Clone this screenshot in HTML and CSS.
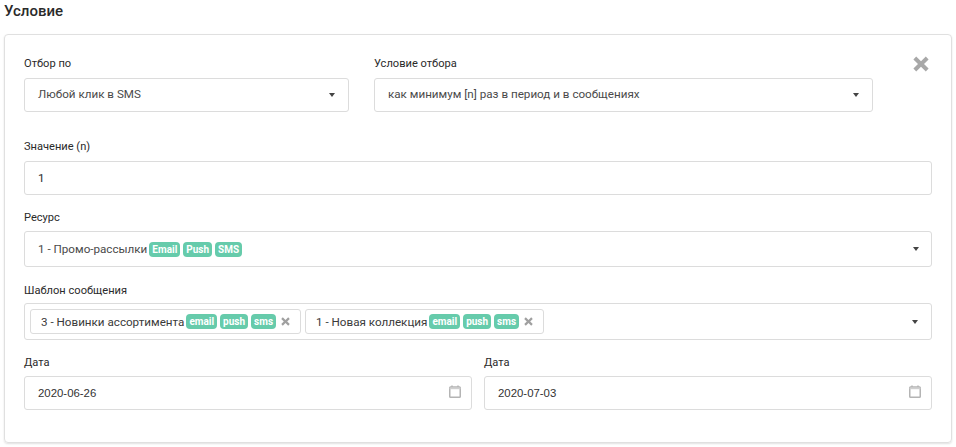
FILE: index.html
```html
<!DOCTYPE html>
<html lang="ru">
<head>
<meta charset="utf-8">
<title>Условие</title>
<link rel="stylesheet" href="styles.css">
</head>
<body>
<h2 class="title">Условие</h2>
<section class="card">
  <div class="row row-top">
    <div class="field f-by">
      <label class="label">Отбор по</label>
      <div class="control select"><span class="value">Любой клик в SMS</span><i class="caret"></i></div>
    </div>
    <div class="field f-cond">
      <label class="label">Условие отбора</label>
      <div class="control select"><span class="value">как минимум [n] раз в период и в сообщениях</span><i class="caret"></i></div>
    </div>
    <button class="close" aria-label="Удалить"><svg viewBox="0 0 16 16" width="16" height="16"><path d="M3.2 0.6 8 5.2 12.8 0.6 15.6 3.4 11 8 15.6 12.6 12.8 15.4 8 10.8 3.2 15.4 0.4 12.6 5 8 0.4 3.4Z"/></svg></button>
  </div>
  <div class="field f-n">
    <label class="label">Значение (n)</label>
    <div class="control"><span class="value dark">1</span></div>
  </div>
  <div class="field f-res">
    <label class="label lab-res">Ресурс</label>
    <div class="control select tall"><span class="value">1 - Промо-рассылки</span><span class="badges"><b class="badge">Email</b><b class="badge">Push</b><b class="badge">SMS</b></span><i class="caret caret-r"></i></div>
  </div>
  <div class="field f-tpl">
    <label class="label lab-tpl">Шаблон сообщения</label>
    <div class="control multi">
      <div class="chip"><span class="chip-text">3 - Новинки ассортимента</span><span class="badges"><b class="badge">email</b><b class="badge">push</b><b class="badge">sms</b></span><svg class="x" viewBox="0 0 16 16" width="9" height="9"><path d="M3.2 0.6 8 5.2 12.8 0.6 15.6 3.4 11 8 15.6 12.6 12.8 15.4 8 10.8 3.2 15.4 0.4 12.6 5 8 0.4 3.4Z"/></svg></div>
      <div class="chip"><span class="chip-text">1 - Новая коллекция</span><span class="badges"><b class="badge">email</b><b class="badge">push</b><b class="badge">sms</b></span><svg class="x" viewBox="0 0 16 16" width="9" height="9"><path d="M3.2 0.6 8 5.2 12.8 0.6 15.6 3.4 11 8 15.6 12.6 12.8 15.4 8 10.8 3.2 15.4 0.4 12.6 5 8 0.4 3.4Z"/></svg></div>
      <i class="caret caret-m"></i>
    </div>
  </div>
  <div class="row row-dates">
    <div class="field f-date">
      <label class="label lab-date">Дата</label>
      <div class="control date"><span class="date-val">2020-06-26</span><svg class="cal" viewBox="0 0 12 13" width="12" height="13"><path d="M3 0.5V2M9 0.5V2" fill="none"/><rect x="0.75" y="2" width="10.5" height="10.25" rx="0.8" fill="none"/><path d="M0.5 2.6h11v1.6h-11z" class="cal-top"/></svg></div>
    </div>
    <div class="field f-date">
      <label class="label lab-date">Дата</label>
      <div class="control date"><span class="date-val">2020-07-03</span><svg class="cal" viewBox="0 0 12 13" width="12" height="13"><path d="M3 0.5V2M9 0.5V2" fill="none"/><rect x="0.75" y="2" width="10.5" height="10.25" rx="0.8" fill="none"/><path d="M0.5 2.6h11v1.6h-11z" class="cal-top"/></svg></div>
    </div>
  </div>
</section>
</body>
</html>
```
FILE: styles.css
```css
* { box-sizing: border-box; }
html, body { margin: 0; background: #fff; }
body {
  width: 956px;
  height: 447px;
  overflow: hidden;
  padding: 0 4px;
  font-family: Roboto, "Noto Sans", sans-serif;
  font-size: 12px;
  color: #3a3a3a;
}
.title {
  margin: 0 0 11px;
  height: 23px;
  line-height: 23px;
  font-size: 15px;
  font-weight: 500;
  color: #2a2a2a;
}
.card {
  width: 948px;
  height: 409px;
  padding: 19px 19px 0;
  border: 1px solid #e0e0e0;
  border-radius: 4px;
  box-shadow: 0 1px 2px rgba(0,0,0,.12);
}
.row { display: flex; }
.row-top { margin-bottom: 25px; }
.f-by { width: 325px; margin-right: 25px; }
.f-cond { width: 499px; }
.close {
  margin: 2px 0 0 40px;
  padding: 0;
  border: 0;
  background: none;
  height: 16px;
  width: 16px;
}
.close svg { display: block; fill: #a8a8a8; }
.label {
  display: block;
  height: 18px;
  line-height: 20px;
  margin-bottom: 6px;
  font-size: 11.1px;
  color: #2a2a2a;
}
.lab-res, .lab-date { margin-bottom: 5px; }
.lab-tpl { margin-bottom: 4px; }
.control {
  display: flex;
  align-items: center;
  height: 34px;
  padding: 0 13px;
  border: 1px solid #dcdcdc;
  border-radius: 3px;
  background: #fff;
}
.value { font-size: 11.65px; line-height: 16px; margin-top: -2px; color: #4a4a4a; white-space: nowrap; }
.value.dark { color: #2d2d2d; margin-top: -1px; }
.select { position: relative; }
.caret {
  margin-left: auto;
  width: 0;
  height: 0;
  border-left: 3.5px solid transparent;
  border-right: 3.5px solid transparent;
  border-top: 4px solid #444;
}
.f-n { margin-bottom: 13px; }
.f-res { margin-bottom: 14px; }
.f-tpl { margin-bottom: 13px; }
.tall { height: 36px; }
.badges { display: inline-flex; gap: 3px; margin-left: 2px; }
.badge {
  display: block;
  height: 15px;
  line-height: 15px;
  padding: 0 3px;
  border-radius: 4px;
  background: #66cbab;
  color: #fff;
  font-size: 10px;
  font-weight: 700;
}
.tall .value { margin-top: -1px; }
.multi { height: 37px; padding: 0 5px; gap: 4px; }
.chip {
  display: flex;
  align-items: center;
  height: 25px;
  padding: 0 10px;
  border: 1px solid #dcdcdc;
  border-radius: 3px;
  white-space: nowrap;
}
.chip-text { font-size: 11.65px; color: #3a3a3a; }
.x { margin-left: 5px; fill: #a0a0a0; }
.caret-m { margin-right: 8px; }
.caret-r { margin-right: -1px; }
.row-dates { gap: 12px; }
.f-date { width: 448px; }
.date { justify-content: space-between; padding-right: 10px; }
.date-val { font-family: "Liberation Sans", sans-serif; font-size: 11.4px; color: #333; }
.cal { stroke: #b4b4b4; stroke-width: 1.5; margin-top: -3px; }
.cal-top { fill: #cfcfcf; stroke: none; }
```
